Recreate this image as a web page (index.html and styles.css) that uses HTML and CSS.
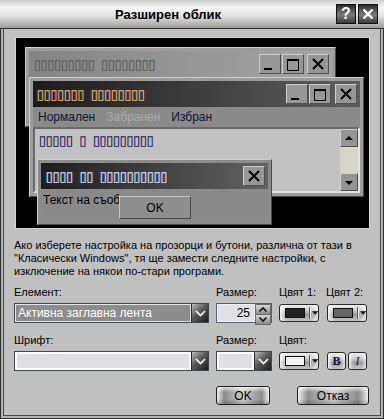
FILE: index.html
```html
<!DOCTYPE html>
<html lang="bg">
<head>
<meta charset="utf-8">
<title>Разширен облик</title>
<link rel="stylesheet" href="styles.css">
</head>
<body>
<div class="dialog">
  <div class="titlebar">
    <span class="title">Разширен облик</span>
    <div class="tbtns">
      <span class="tbtn help">?</span>
      <span class="tbtn"><svg width="20" height="20" viewBox="0 0 20 20"><path d="M5 5 L15 15 M15 5 L5 15" stroke="#fff" stroke-width="2.6"/></svg></span>
    </div>
  </div>
  <div class="frame">
    <div class="inner">
      <div class="preview">
        <div class="win inactive">
          <div class="caption">
            <span class="tofu t-inactive">▯▯▯▯▯▯▯▯▯ ▯▯▯▯▯▯▯▯</span>
            <div class="cbtns">
              <span class="cbtn"><svg width="20" height="18" viewBox="0 0 20 18"><rect x="4" y="13" width="8" height="2" fill="#000"/></svg></span>
              <span class="cbtn"><svg width="20" height="18" viewBox="0 0 20 18"><path d="M4.5 5.5 H15.5 V15.5 H4.5 Z" fill="none" stroke="#000"/><rect x="4" y="4" width="12" height="2" fill="#000"/></svg></span>
              <span class="cbtn close"><svg width="20" height="18" viewBox="0 0 20 18"><path d="M5 4 L15 14 M15 4 L5 14" stroke="#000" stroke-width="2"/></svg></span>
            </div>
          </div>
        </div>
        <div class="win active">
          <div class="caption">
            <span class="tofu t-active">▯▯▯▯▯▯▯ ▯▯▯▯▯▯▯▯</span>
            <div class="cbtns">
              <span class="cbtn"><svg width="20" height="18" viewBox="0 0 20 18"><rect x="4" y="13" width="8" height="2" fill="#000"/></svg></span>
              <span class="cbtn"><svg width="20" height="18" viewBox="0 0 20 18"><path d="M4.5 5.5 H15.5 V15.5 H4.5 Z" fill="none" stroke="#000"/><rect x="4" y="4" width="12" height="2" fill="#000"/></svg></span>
              <span class="cbtn close"><svg width="20" height="18" viewBox="0 0 20 18"><path d="M5 4 L15 14 M15 4 L5 14" stroke="#000" stroke-width="2"/></svg></span>
            </div>
          </div>
          <div class="menu">
            <span>Нормален</span>
            <span class="disabled">Забранен</span>
            <span>Избран</span>
          </div>
          <div class="client">
            <span class="tofu t-client">▯▯▯▯▯ ▯ ▯▯▯▯▯▯▯▯▯</span>
            <div class="scrollbar">
              <span class="sbtn"><svg width="16" height="16" viewBox="0 0 16 16"><path d="M4 10 H12 L8 6 Z" fill="#000"/></svg></span>
              <span class="strack"></span>
              <span class="sbtn"><svg width="16" height="16" viewBox="0 0 16 16"><path d="M4 7 H12 L8 11 Z" fill="#000"/></svg></span>
            </div>
          </div>
        </div>
        <div class="win msg">
          <div class="caption">
            <span class="tofu t-msg">▯▯▯▯ ▯▯ ▯▯▯▯▯▯▯▯▯▯</span>
            <div class="cbtns">
              <span class="cbtn close"><svg width="20" height="18" viewBox="0 0 20 18"><path d="M5 4 L15 14 M15 4 L5 14" stroke="#000" stroke-width="2"/></svg></span>
            </div>
          </div>
          <div class="msgbody">
            <span class="msgtext">Текст на съобщ</span>
            <span class="msgok">OK</span>
          </div>
        </div>
      </div>

      <p class="desc">Ако изберете настройка на прозорци и бутони, различна от тази в "Класически Windows", тя ще замести следните настройки, с изключение на някои по-стари програми.</p>

      <div class="fields">
        <label class="lbl">Елемент:</label>
        <label class="lbl">Размер:</label>
        <label class="lbl">Цвят 1:</label>
        <label class="lbl">Цвят 2:</label>

        <div class="combo dark">
          <span class="cfield">Активна заглавна лента</span>
          <span class="cdrop"><svg width="15" height="18" viewBox="0 0 15 18"><path d="M3 7 L7.5 11.5 L12 7" fill="none" stroke="#fff" stroke-width="1.6"/></svg></span>
        </div>
        <div class="spin">
          <span class="snum">25</span>
          <span class="sarrows">
            <span class="sarr"><svg width="14" height="9" viewBox="0 0 14 9"><path d="M3.5 6.5 L7 3 L10.5 6.5" fill="none" stroke="#111" stroke-width="1.6"/></svg></span>
            <span class="sarr"><svg width="14" height="9" viewBox="0 0 14 9"><path d="M3.5 2.5 L7 6 L10.5 2.5" fill="none" stroke="#111" stroke-width="1.6"/></svg></span>
          </span>
        </div>
        <div class="colorbtn"><span class="swatch sw1"></span><span class="csep"></span><svg class="ctri" width="7" height="4" viewBox="0 0 7 4"><path d="M0 0 H7 L3.5 4 Z" fill="#000"/></svg></div>
        <div class="colorbtn end"><span class="swatch sw2"></span><span class="csep"></span><svg class="ctri" width="7" height="4" viewBox="0 0 7 4"><path d="M0 0 H7 L3.5 4 Z" fill="#000"/></svg></div>

        <label class="lbl row2">Шрифт:</label>
        <label class="lbl row2">Размер:</label>
        <label class="lbl row2">Цвят:</label>
        <span class="lbl row2"></span>

        <div class="combo light">
          <span class="cfield"></span>
          <span class="cdrop"><svg width="15" height="18" viewBox="0 0 15 18"><path d="M3 7 L7.5 11.5 L12 7" fill="none" stroke="#fff" stroke-width="1.6"/></svg></span>
        </div>
        <div class="combo light">
          <span class="cfield"></span>
          <span class="cdrop"><svg width="15" height="18" viewBox="0 0 15 18"><path d="M3 7 L7.5 11.5 L12 7" fill="none" stroke="#fff" stroke-width="1.6"/></svg></span>
        </div>
        <div class="colorbtn"><span class="swatch sw3"></span><span class="csep"></span><svg class="ctri" width="7" height="4" viewBox="0 0 7 4"><path d="M0 0 H7 L3.5 4 Z" fill="#000"/></svg></div>
        <div class="styles">
          <span class="sbtn2 bold">B</span>
          <span class="sbtn2 ital">I</span>
        </div>
      </div>

      <div class="actions">
        <span class="pbtn ok">OK</span>
        <span class="pbtn cancel">Отказ</span>
      </div>
    </div>
  </div>
</div>
</body>
</html>
```

FILE: styles.css
```css
* { box-sizing: border-box; }
html, body { margin: 0; padding: 0; }
body {
  width: 384px;
  height: 419px;
  overflow: hidden;
  background: #c0c0c0;
  font-family: "Liberation Sans", Arial, sans-serif;
  font-size: 11px;
  color: #000;
}
.dialog {
  width: 384px;
  height: 419px;
  display: flex;
  flex-direction: column;
}
.titlebar {
  height: 29px;
  flex: none;
  display: flex;
  align-items: center;
  padding-right: 6px;
  background: linear-gradient(to bottom, #cdcdcd 0%, #f6f6f6 28%, #e4e4e4 55%, #9e9e9e 100%);
  border-bottom: 1px solid #2e2e2e;
}
.title {
  flex: 1;
  text-align: center;
  font-weight: bold;
  font-size: 13px;
  color: #000;
  padding-top: 1px;
}
.tbtns { display: flex; gap: 2px; }
.tbtn {
  width: 20px;
  height: 20px;
  display: flex;
  align-items: center;
  justify-content: center;
  border: 1px solid #111;
  background: linear-gradient(to bottom, #2c2c2c, #7a7a7a 55%, #3a3a3a);
  color: #fff;
  font-weight: bold;
  font-size: 16px;
}
.tbtn svg { display: block; }

.frame {
  flex: 1;
  display: flex;
  border: 1px solid #2e2e2e;
  border-top: 0;
  padding: 0 2px 2px 2px;
  background: #b4b4b4;
}
.inner {
  flex: 1;
  border: 1px solid #4a4a4a;
  border-top: 0;
  background: #c0c0c0;
  padding: 8px 10px 0 10px;
  display: flex;
  flex-direction: column;
}

/* preview canvas */
.preview {
  position: relative;
  width: 355px;
  height: 192px;
  margin-left: 1px;
  background: #000;
  border: 1px solid #d4d4d4;
  flex: none;
  overflow: hidden;
}
.win {
  position: absolute;
  display: flex;
  flex-direction: column;
  background: #9c9c9c;
  border: 1px solid;
  border-color: #cfcfcf #4a4a4a #4a4a4a #cfcfcf;
  padding: 3px;
}
.inactive { left: 9px; top: 9px; width: 311px; height: 80px; }
.active { left: 13px; top: 39px; width: 335px; height: 120px; }
.msg { left: 21px; top: 121px; width: 235px; height: 66px; background: #8c8c8c; }

.caption {
  height: 26px;
  flex: none;
  display: flex;
  align-items: center;
  padding: 0 3px 0 3px;
}
.inactive .caption { background: linear-gradient(to right, #848484, #a6a6a6); }
.active .caption { background: linear-gradient(to right, #1c1c1c, #5e5e5e); padding-left: 2px; }
.msg .caption { background: linear-gradient(to right, #1e1e1e, #626262); height: 26px; }

.tofu {
  font-family: "DejaVu Sans Mono", monospace;
  font-size: 17px;
  letter-spacing: -3.5px;
  line-height: 14px;
  white-space: nowrap;
}
.t-inactive { color: #585858; }
.t-active { color: #f0b660; text-shadow: -1px 0 0 rgba(60,90,200,0.55); }
.t-client { color: #14226c; text-shadow: 1px 0 0 rgba(220,150,60,0.45); }
.t-msg { color: #dfe4f4; text-shadow: -1px 0 0 rgba(70,100,210,0.5); }

.cbtns { margin-left: auto; display: flex; gap: 1px; }
.cbtn {
  width: 22px;
  height: 20px;
  display: flex;
  align-items: center;
  justify-content: center;
  background: #979797;
  border: 1px solid;
  border-color: #cdcdcd #4e4e4e #4e4e4e #cdcdcd;
}
.cbtn.close { margin-left: 2px; }
.active .cbtn.close { margin-left: 3px; }
.msg .cbtn.close { margin-left: 0; }
.cbtn svg { display: block; }

.menu {
  height: 20px;
  flex: none;
  display: flex;
  align-items: center;
  gap: 11px;
  padding-left: 5px;
  background: #8a8a8a;
  font-size: 12px;
  color: #0e1436;
}
.menu .disabled { color: #a9a9a9; }

.client {
  flex: 1;
  display: flex;
  align-items: flex-start;
  background: #c2c2c2;
  border: 2px solid;
  border-color: #6a6a6a #e2e2e2 #e2e2e2 #6a6a6a;
  padding: 4px 0 0 2px;
}
.scrollbar {
  margin-left: auto;
  margin-top: -4px;
  align-self: stretch;
  width: 18px;
  display: flex;
  flex-direction: column;
}
.sbtn {
  width: 18px;
  height: 18px;
  display: flex;
  align-items: center;
  justify-content: center;
  background: #959595;
  border: 1px solid;
  border-color: #cfcfcf #505050 #505050 #cfcfcf;
}
.strack { flex: 1; background: #d8d4cc; }

.msgbody {
  flex: 1;
  display: flex;
  align-items: flex-start;
  padding: 4px 0 0 2px;
  background: #8a8a8a;
}
.msgtext {
  width: 76px;
  overflow: hidden;
  white-space: nowrap;
  font-size: 12px;
  color: #000;
}
.msgok {
  width: 72px;
  height: 23px;
  margin-top: 3px;
  display: flex;
  align-items: center;
  justify-content: center;
  font-size: 12px;
  background: #8e8e8e;
  border: 1px solid;
  border-color: #c8c8c8 #4a4a4a #4a4a4a #c8c8c8;
}

/* description */
.desc {
  margin: 10px 0 0 0;
  line-height: 13px;
  font-size: 11px;
  color: #000;
}

/* fields grid */
.fields {
  margin-top: 8px;
  display: grid;
  grid-template-columns: 195px 56px 40px 41px;
  column-gap: 7px;
  grid-template-rows: 13px 24px 24px 24px;
}
.lbl { line-height: 13px; color: #000; display: block; }
.fields > .combo, .fields > .spin, .fields > .colorbtn, .fields > .styles { margin-top: 4px; }
.fields > .lbl.row2 { margin-top: 11px; }

.combo {
  height: 20px;
  display: flex;
  border: 1px solid #3f4753;
}
.cfield {
  flex: 1;
  border: 1px solid #f4f4f4;
  padding-left: 2px;
  display: flex;
  align-items: center;
  white-space: nowrap;
  overflow: hidden;
  font-size: 12px;
}
.combo.dark .cfield { background: #8c8c8c; color: #fff; border-color: #e6e6e6; }
.combo.light .cfield { background: #e0e0e4; border-width: 2px; border-color: #ffffff; }
.cdrop {
  width: 17px;
  display: flex;
  align-items: center;
  justify-content: center;
  background: linear-gradient(135deg, #bdbdbd 0%, #5a5a5a 45%, #1a1a1a 100%);
  border-left: 1px solid #2a2a2a;
}

.spin {
  height: 20px;
  display: flex;
  border: 1px solid #5a6270;
  background: #e0e0e8;
}
.snum {
  flex: 1;
  display: flex;
  align-items: center;
  justify-content: flex-end;
  padding-right: 4px;
  font-size: 12px;
  border: 1px solid #f0f0f4;
}
.sarrows {
  width: 16px;
  display: flex;
  flex-direction: column;
}
.sarr {
  flex: 1;
  display: flex;
  align-items: center;
  justify-content: center;
  background: linear-gradient(to bottom, #d8d8d8, #8a8a8a);
  border: 1px solid #6a6a6a;
}
.sarr + .sarr { border-top: 0; }

.colorbtn {
  width: 40px;
  height: 18px;
  align-self: center;
  display: flex;
  align-items: center;
  padding-left: 5px;
  border: 1px solid #2a2a2a;
  border-radius: 3px;
  background:
    linear-gradient(to right, rgba(255,255,255,0.85), rgba(255,255,255,0) 18%, rgba(255,255,255,0) 82%, rgba(255,255,255,0.7)),
    linear-gradient(to bottom, #f2f2f2, #bdbdbd 45%, #9a9a9a 60%, #c6c6c6);
}
.colorbtn.end { justify-self: end; }
.swatch {
  width: 22px;
  height: 10px;
  border: 1px solid #111;
}
.sw1 { background: #232323; }
.sw2 { background: #646464; }
.sw3 { background: #f2f2f2; }
.csep {
  width: 1px;
  height: 12px;
  margin-left: 4px;
  background: #555;
  box-shadow: 1px 0 0 #eee;
}
.ctri { margin-left: 2px; }

.styles {
  display: flex;
  justify-content: flex-end;
  gap: 2px;
  align-items: center;
}
.sbtn2 {
  width: 19px;
  height: 18px;
  display: flex;
  align-items: center;
  justify-content: center;
  border: 1px solid #2a2a2a;
  border-radius: 3px;
  font-family: "Liberation Serif", "Times New Roman", serif;
  font-size: 12px;
  color: #0a1440;
  background:
    linear-gradient(to right, rgba(255,255,255,0.85), rgba(255,255,255,0) 25%, rgba(255,255,255,0) 75%, rgba(255,255,255,0.7)),
    linear-gradient(to bottom, #f2f2f2, #bdbdbd 45%, #9a9a9a 60%, #c6c6c6);
}
.sbtn2.bold { font-weight: bold; }
.sbtn2.ital { font-style: italic; }

.actions {
  margin-top: 15px;
  display: flex;
  padding-left: 202px;
}
.pbtn {
  height: 19px;
  display: flex;
  align-items: center;
  justify-content: center;
  font-size: 12px;
  color: #000;
  border: 1px solid #1e1e1e;
  border-radius: 3px;
  background:
    linear-gradient(to bottom, rgba(255,255,255,0.75), rgba(255,255,255,0) 30%, rgba(0,0,0,0) 70%, rgba(0,0,0,0.18)),
    linear-gradient(to right, #f0f0f0 0, #8c8c8c 14%, #cfcfcf 50%, #8c8c8c 86%, #efefef 100%);
}
.pbtn.ok { width: 54px; }
.pbtn.cancel { width: 72px; margin-left: 27px; }
```
